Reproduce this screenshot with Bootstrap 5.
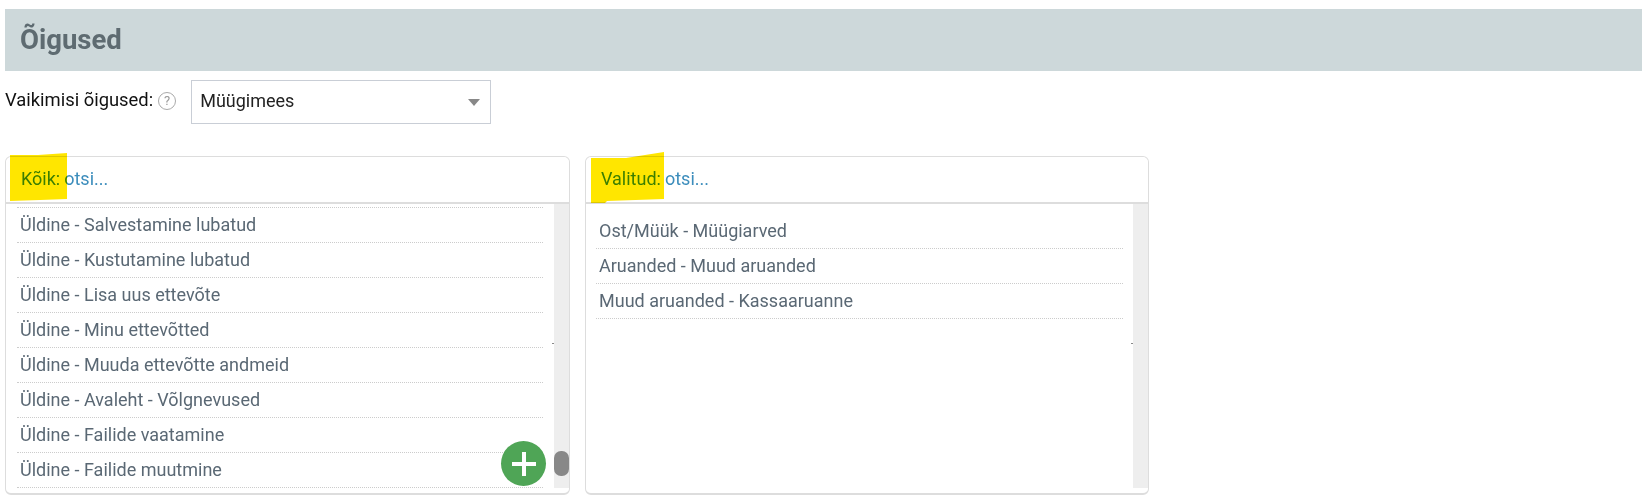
<!DOCTYPE html>
<html lang="et">
<head>
<meta charset="utf-8">
<title>Õigused</title>
<link href="https://cdn.jsdelivr.net/npm/bootstrap@5.3.0/dist/css/bootstrap.min.css" rel="stylesheet">
<style>
html,body{background:#fff;margin:0;overflow:hidden}
body{font-family:Roboto,"Liberation Sans",sans-serif;font-size:18px;color:#111;height:501px;padding:9px 0 0 5px}
.title-band{background:#cdd8da;height:62px;padding:0 15px}
.title-band h1{font-family:Roboto,sans-serif;font-size:27.5px;font-weight:700;color:#5e6b71;margin:0;line-height:61px}
.default-row{height:44px;margin-top:9px}
.default-label{font-size:18.4px;color:#111;padding-bottom:4px}
.help-mark{width:18px;height:18px;border:1px solid #aaa;border-radius:50%;font-size:13px;line-height:16px;color:#999;text-align:center;margin:0 15px 2px 5px}
.fake-select{width:300px;height:44px;border:1px solid #c9ced6;padding:0 10px 0 8px;font-size:18px;color:#222}
.fake-select .sel-text{padding-bottom:4px}
.caret-down{width:0;height:0;border-left:6px solid transparent;border-right:6px solid transparent;border-top:7px solid #888}
.panels{margin-top:32px;gap:15px}
.perm-panel{width:565px;height:339px;border:1px solid #ddd;border-width:1px 1px 2px 1px;border-radius:6px;position:relative;overflow:visible;background:#fff}
.panel-right{width:564px}
.perm-panel .card-header{height:47px;background:#fff;border-bottom:2px solid #ddd;padding:0 15px;font-size:18px;line-height:43px;color:#5f6c72;border-radius:6px 6px 0 0;flex:none}
.perm-panel .card-header .lbl{color:#3c8dbc}
.perm-panel .card-header .srch{color:#3c8dbc;margin-left:4px}
.perm-body{height:284px;flex:none}
.perm-list{flex:1;margin:0;padding:0 0 0 11px;list-style:none;overflow:hidden}
.perm-list li{height:35px;border-bottom:1px dotted #ccc;padding-left:3px;line-height:34px;color:#5a6874;font-size:18px;width:527px}
.list-left li{width:526px}
.list-left li:first-child{height:4px;padding:0;line-height:0;overflow:hidden}
.list-right{padding:10px 0 0 10px}
.fake-scroll{width:15px;background:#eee;position:relative;flex:none}
.scroll-thumb{position:absolute;left:0;top:247px;width:15px;height:25px;border-radius:7px;background:#888}
.scroll-tick{position:absolute;left:-2px;top:139px;width:2px;height:1px;background:#888}
.add-btn{position:absolute;left:495px;top:284px;width:45px;height:45px;border-radius:50%;background:#4fa556;border:0;padding:0;z-index:2}
.marker{position:absolute;mix-blend-mode:multiply;pointer-events:none;z-index:3}
</style>
</head>
<body>
<div class="title-band"><h1>Õigused</h1></div>

<div class="default-row d-flex align-items-center">
  <span class="default-label">Vaikimisi õigused:</span>
  <span class="help-mark flex-shrink-0">?</span>
  <div class="fake-select d-flex align-items-center justify-content-between">
    <span class="sel-text">Müügimees</span><span class="caret-down"></span>
  </div>
</div>

<div class="panels d-flex">
  <div class="card perm-panel">
    <svg class="marker" style="left:4px;top:-4px" width="60" height="50" viewBox="0 0 60 50"><polygon points="0,2 28,2 57,0 57,46 30,47 0,48" fill="#ffe600"/></svg>
    <div class="card-header"><span class="lbl">Kõik:</span><span class="srch">otsi...</span></div>
    <div class="perm-body d-flex">
      <ul class="perm-list list-left">
        <li></li>
        <li>Üldine - Salvestamine lubatud</li>
        <li>Üldine - Kustutamine lubatud</li>
        <li>Üldine - Lisa uus ettevõte</li>
        <li>Üldine - Minu ettevõtted</li>
        <li>Üldine - Muuda ettevõtte andmeid</li>
        <li>Üldine - Avaleht - Võlgnevused</li>
        <li>Üldine - Failide vaatamine</li>
        <li>Üldine - Failide muutmine</li>
      </ul>
      <div class="fake-scroll"><span class="scroll-tick"></span><span class="scroll-thumb"></span></div>
    </div>
    <button type="button" class="add-btn d-flex align-items-center justify-content-center" aria-label="Lisa">
      <svg width="24" height="24" viewBox="0 0 24 24"><path d="M10 0h4v10h10v4H14v10h-4V14H0v-4h10z" fill="#fff"/></svg>
    </button>
  </div>

  <div class="card perm-panel panel-right">
    <svg class="marker" style="left:5px;top:-5px" width="76" height="52" viewBox="0 0 76 52"><polygon points="0,6 35,6 73,0 73,47 16,49 14,51 0,51" fill="#ffe600"/></svg>
    <div class="card-header"><span class="lbl">Valitud:</span><span class="srch">otsi...</span></div>
    <div class="perm-body d-flex">
      <ul class="perm-list list-right">
        <li>Ost/Müük - Müügiarved</li>
        <li>Aruanded - Muud aruanded</li>
        <li>Muud aruanded - Kassaaruanne</li>
      </ul>
      <div class="fake-scroll"><span class="scroll-tick"></span></div>
    </div>
  </div>
</div>
<script src="https://cdn.jsdelivr.net/npm/bootstrap@5.3.0/dist/js/bootstrap.bundle.min.js"></script>
</body>
</html>
